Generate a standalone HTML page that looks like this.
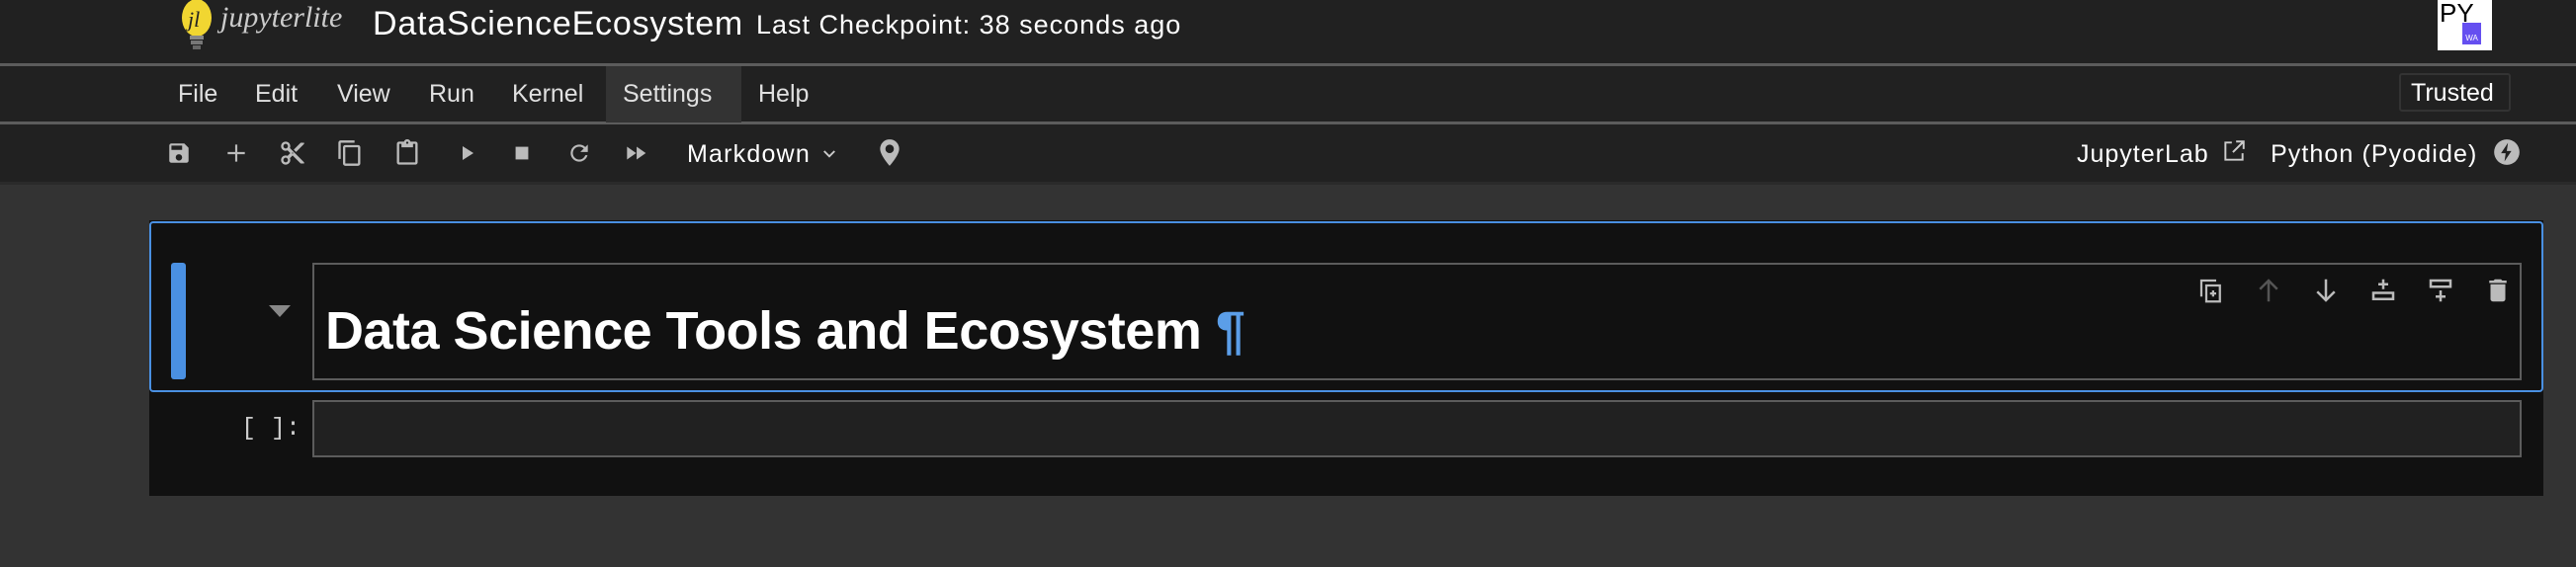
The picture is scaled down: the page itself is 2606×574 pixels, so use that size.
<!DOCTYPE html>
<html><head><meta charset="utf-8"><style>
*{margin:0;padding:0;box-sizing:border-box}
body{width:2606px;height:574px;background:#333;font-family:"Liberation Sans",sans-serif;color:#e0e0e0;position:relative;overflow:hidden}
.abs{position:absolute}
.bar{position:absolute;left:0;width:2606px;background:#212121}
.ln{position:absolute;left:0;width:2606px;height:3px;background:#5c5c5c}
.menu{position:absolute;top:81px;font-size:25px;color:#e0e0e0}
svg{position:absolute}
</style></head><body>
<div class="bar" style="top:0;height:65px"></div>
<div class="ln" style="top:64px"></div>
<div class="bar" style="top:67px;height:57px"></div>
<div class="ln" style="top:123px"></div>
<div class="bar" style="top:126px;height:58px"></div>
<div class="ln" style="top:184px;background:#2a2a2a"></div>

<!-- logo -->
<svg style="left:178px;top:0" width="175" height="52" viewBox="0 0 175 52">
<ellipse cx="21" cy="18" rx="15" ry="19" fill="#f1d631"/>
<rect x="14" y="36" width="14" height="4" fill="#888"/><rect x="15" y="41" width="12" height="4" fill="#777"/><rect x="17" y="46" width="8" height="4" fill="#666"/>
<text x="12" y="27" font-family="Liberation Serif" font-style="italic" font-size="22" fill="#222">jl</text>
<text x="45" y="27" font-family="Liberation Serif" font-style="italic" font-size="30" fill="#ccc">jupyterlite</text>
</svg>
<div class="abs" style="left:377px;top:5px;font-size:34px;color:#fff;letter-spacing:0.8px">DataScienceEcosystem</div>
<div class="abs" style="left:765px;top:10px;font-size:27px;color:#fff;letter-spacing:1px">Last Checkpoint: 38 seconds ago</div>
<div class="abs" style="left:2466px;top:0;width:55px;height:51px;background:#fff"></div>
<div class="abs" style="left:2468px;top:-2px;font-size:26px;color:#000">PY</div>
<div class="abs" style="left:2491px;top:23px;width:19px;height:22px;background:#654ff0;color:#fff;font-size:8px;text-align:center;padding-top:11px">WA</div>

<!-- menu -->
<div class="abs" style="left:613px;top:67px;width:137px;height:57px;background:#333"></div>
<div class="menu" style="left:180px">File</div>
<div class="menu" style="left:258px">Edit</div>
<div class="menu" style="left:341px">View</div>
<div class="menu" style="left:434px">Run</div>
<div class="menu" style="left:518px">Kernel</div>
<div class="menu" style="left:630px">Settings</div>
<div class="menu" style="left:767px">Help</div>
<div class="abs" style="left:2427px;top:74px;width:113px;height:39px;border:2px solid #333;border-radius:3px;font-size:25px;padding:4px 0 0 10px;color:#fff">Trusted</div>

<!-- toolbar -->
<svg style="left:168px;top:142px" width="26" height="26" viewBox="0 0 24 24"><path fill="#bbb" d="M17 3H5a2 2 0 0 0-2 2v14a2 2 0 0 0 2 2h14a2 2 0 0 0 2-2V7l-4-4zm-5 16a3 3 0 1 1 0-6 3 3 0 0 1 0 6zm3-10H5V5h10v4z"/></svg>
<svg style="left:226px;top:142px" width="26" height="26" viewBox="0 0 24 24"><path stroke="#bbb" stroke-width="2" d="M12 4v16M4 12h16"/></svg>
<svg style="left:282px;top:141px" width="28" height="28" viewBox="0 0 24 24"><path fill="#bbb" d="M9.64 7.64c.23-.5.36-1.05.36-1.64 0-2.210-1.790-4-4-4S2 3.79 2 6s1.79 4 4 4c.59 0 1.14-.13 1.64-.36L10 12l-2.36 2.36C7.14 14.13 6.59 14 6 14c-2.21 0-4 1.79-4 4s1.79 4 4 4 4-1.79 4-4c0-.59-.13-1.14-.36-1.64L12 14l7 7h3v-1L9.640 7.640zM6 8a2 2 0 1 1 0-4 2 2 0 0 1 0 4zm0 12a2 2 0 1 1 0-4 2 2 0 0 1 0 4zm6-7.5a.5.5 0 1 1 0-1 .5.5 0 0 1 0 1zM19 3l-6 6 2 2 7-7V3z"/></svg>
<svg style="left:340px;top:141px" width="28" height="28" viewBox="0 0 24 24"><path fill="#bbb" d="M16 1H4a2 2 0 0 0-2 2v14h2V3h12V1zm3 4H8a2 2 0 0 0-2 2v14a2 2 0 0 0 2 2h11a2 2 0 0 0 2-2V7a2 2 0 0 0-2-2zm0 16H8V7h11v14z"/></svg>
<svg style="left:398px;top:141px" width="28" height="28" viewBox="0 0 24 24"><path fill="#bbb" d="M19 2h-4.18C14.4.84 13.3 0 12 0S9.6.84 9.18 2H5a2 2 0 0 0-2 2v16a2 2 0 0 0 2 2h14a2 2 0 0 0 2-2V4a2 2 0 0 0-2-2zm-7 0a1 1 0 1 1 0 2 1 1 0 0 1 0-2zm7 18H5V4h2v3h10V4h2v16z"/></svg>
<svg style="left:460px;top:143px" width="24" height="24" viewBox="0 0 24 24"><path fill="#bbb" d="M8 5v14l11-7z"/></svg>
<svg style="left:517px;top:144px" width="22" height="22" viewBox="0 0 24 24"><path fill="#bbb" d="M5 5h14v14H5z"/></svg>
<svg style="left:573px;top:142px" width="26" height="26" viewBox="0 0 24 24"><path fill="#bbb" d="M17.65 6.35A7.958 7.958 0 0 0 12 4a8 8 0 1 0 7.73 10h-2.08A6 6 0 1 1 12 6c1.66 0 3.14.69 4.22 1.78L13 11h7V4l-2.35 2.35z"/></svg>
<svg style="left:629px;top:142px" width="28" height="26" viewBox="0 0 24 24"><path fill="#bbb" d="M4 18l8.5-6L4 6v12zm9-12v12l8.5-6L13 6z"/></svg>
<div class="abs" style="left:695px;top:142px;font-size:25px;color:#fff;letter-spacing:1.2px">Markdown</div>
<svg style="left:830px;top:147px" width="18" height="18" viewBox="0 0 24 24"><path stroke="#ccc" stroke-width="2.5" fill="none" d="M5 8l7 7 7-7"/></svg>
<svg style="left:887px;top:140px" width="26" height="30" viewBox="0 0 24 28"><path fill="#bbb" d="M12 1a9 9 0 0 0-9 9c0 6 9 16 9 16s9-10 9-16a9 9 0 0 0-9-9zm0 13a4 4 0 1 1 0-8 4 4 0 0 1 0 8z"/></svg>
<div class="abs" style="left:2101px;top:142px;font-size:25px;color:#fff;letter-spacing:1px">JupyterLab</div>
<svg style="left:2247px;top:140px" width="26" height="26" viewBox="0 0 24 24"><path stroke="#ccc" stroke-width="1.8" fill="none" d="M10 4H4v16h16v-6M14 3h7v7M21 3l-10 10"/></svg>
<div class="abs" style="left:2297px;top:142px;font-size:25px;color:#fff;letter-spacing:1.1px">Python (Pyodide)</div>
<svg style="left:2522px;top:140px" width="28" height="28" viewBox="0 0 24 24"><circle cx="12" cy="12" r="11" fill="#bbb"/><path fill="#212121" d="M13 4l-6 9h4l-1 7 6-9h-4z"/></svg>

<!-- notebook -->
<div class="abs" style="left:151px;top:223px;width:2422px;height:279px;background:#111"></div>
<div class="abs" style="left:151px;top:224px;width:2422px;height:173px;border:2px solid #4a90e2;border-radius:4px"></div>
<div class="abs" style="left:173px;top:266px;width:15px;height:118px;background:#4a90e2;border-radius:3px"></div>
<svg style="left:272px;top:309px" width="22" height="14" viewBox="0 0 22 14"><path fill="#888" d="M0 0h22L11 12z"/></svg>
<div class="abs" style="left:316px;top:266px;width:2235px;height:119px;border:2px solid #5c5c5c;background:#111"></div>
<div class="abs" style="left:329px;top:304px;font-size:54px;color:#fff;font-weight:bold;letter-spacing:-0.5px">Data Science Tools and Ecosystem <span style="color:#5b9ee8">¶</span></div>
<svg style="left:2222px;top:279px" width="30" height="30" viewBox="0 0 24 24"><path stroke="#bbb" stroke-width="1.8" fill="none" d="M4 17V4h12M8 8h11v13H8zM13.5 12v5M11 14.5h5"/></svg>
<svg style="left:2280px;top:279px" width="30" height="30" viewBox="0 0 24 24"><path stroke="#555" stroke-width="2" fill="none" d="M12 21V4M5 11l7-7 7 7"/></svg>
<svg style="left:2338px;top:279px" width="30" height="30" viewBox="0 0 24 24"><path stroke="#bbb" stroke-width="2" fill="none" d="M12 3v17M5 13l7 7 7-7"/></svg>
<svg style="left:2396px;top:279px" width="30" height="30" viewBox="0 0 24 24"><path stroke="#bbb" stroke-width="2" fill="none" d="M12 3v8M8 7h8M4 14h16v5H4z"/></svg>
<svg style="left:2454px;top:279px" width="30" height="30" viewBox="0 0 24 24"><path stroke="#bbb" stroke-width="2" fill="none" d="M4 4h16v5H4zM12 12v9M8 17h8"/></svg>
<svg style="left:2512px;top:279px" width="30" height="30" viewBox="0 0 24 24"><path fill="#bbb" d="M6 19a2 2 0 0 0 2 2h8a2 2 0 0 0 2-2V7H6v12zM19 4h-3.5l-1-1h-5l-1 1H5v2h14V4z"/></svg>
<div class="abs" style="left:244px;top:419px;font-family:'Liberation Mono',monospace;font-size:25px;color:#ccc">[ ]:</div>
<div class="abs" style="left:316px;top:405px;width:2235px;height:58px;border:2px solid #5c5c5c;background:#212121"></div>
</body></html>
